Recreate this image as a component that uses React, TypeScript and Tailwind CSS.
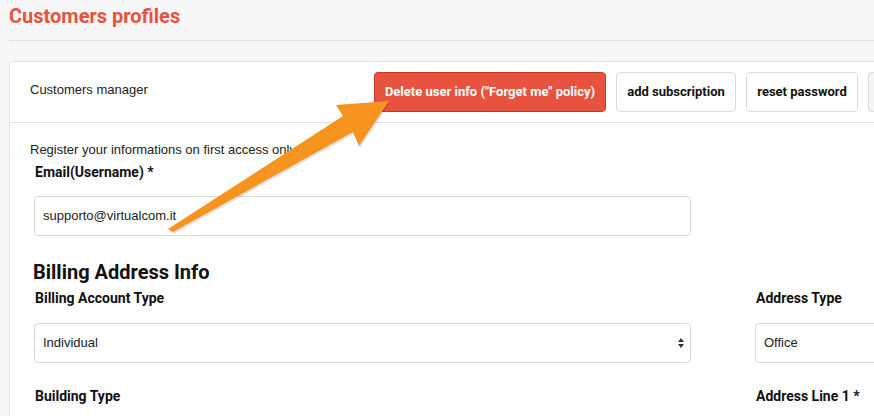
const sans = "font-['Liberation_Sans',Arial,sans-serif]";
const roboto = "font-['Roboto','Liberation_Sans',sans-serif]";

function Label({ children }: { children: React.ReactNode }) {
  return (
    <div className={`${roboto} pl-px text-[14px] leading-[20px] font-bold text-[#111]`}>
      {children}
    </div>
  );
}

function Field({ value, select }: { value: string; select?: boolean }) {
  return (
    <div
      className={`${sans} flex h-10 items-center justify-between rounded-[4px] border border-[#dcdcdc] bg-white pl-[8px] pr-[4px] text-[13px] text-[#222]`}
    >
      <span>{value}</span>
      {select && (
        <svg width="8" height="12" viewBox="0 0 8 12" className="mr-[1px]">
          <path d="M4 1 L7 5 H1 Z" fill="#333" />
          <path d="M4 11 L7 7 H1 Z" fill="#333" />
        </svg>
      )}
    </div>
  );
}

function Arrow() {
  // callout arrow pointing at the delete button
  return (
    <svg
      className="pointer-events-none absolute left-0 top-0"
      width="874"
      height="416"
      viewBox="0 0 874 416"
    >
      <polygon
        points="168,229 343,116 336,105 389,101 359,146 353,132 173,232"
        fill="#000"
        opacity="0.12"
        transform="translate(1,2)"
      />
      <polygon
        points="168,229 343,116 336,105 389,101 359,146 353,132 173,232"
        fill="#f7941f"
      />
    </svg>
  );
}

export default function App() {
  return (
    <div className="relative h-[416px] w-[874px] overflow-hidden bg-[#f7f7f7]">
      <div className="pl-[9px]">
        <h1 className={`${roboto} pt-[2px] text-[20px] leading-[28px] font-bold text-[#e8533f]`}>
          Customers profiles
        </h1>
        <div className="mt-[10px] h-px w-[900px] bg-[#e0e0e0]" />

        <div className="mt-[20px] w-[960px] rounded-[4px] border border-[#e3e3e3] bg-white">
          <div className="flex h-[61px] items-center border-b border-[#e3e3e3] pl-[20px]">
            <div className={`${sans} -mt-[4px] w-[345px] text-[13px] text-[#222]`}>Customers manager</div>
            <div className={`${roboto} flex gap-[10px] text-[13px] font-bold`}>
              <button className="h-10 w-[232px] rounded-[4px] border border-[#c23a29] bg-[#e8533f] text-white">
                Delete user info ("Forget me" policy)
              </button>
              <button className="h-10 w-[120px] rounded-[4px] border border-[#dcdcdc] bg-white text-[#111]">
                add subscription
              </button>
              <button className="h-10 w-[112px] rounded-[4px] border border-[#dcdcdc] bg-white text-[#111]">
                reset password
              </button>
              <button className="h-10 w-[100px] rounded-[4px] border border-[#dcdcdc] bg-[#f5f5f5]" />
            </div>
          </div>

          <div className="h-[400px] pl-[20px] pt-[18px]">
            <div className={`${sans} text-[13px] leading-[18px] text-[#222]`}>
              Register your informations on first access only
            </div>
            <div className="mt-[3px] w-[657px] pl-[4px]">
              <Label>Email(Username) *</Label>
            </div>
            <div className="mt-[14px] ml-[4px] w-[657px]">
              <Field value="supporto@virtualcom.it" />
            </div>

            <h2 className={`${roboto} ml-[3px] mt-[22px] text-[20px] leading-[28px] font-bold text-[#111]`}>
              Billing Address Info
            </h2>

            <div className="ml-[4px] mt-[2px] grid grid-cols-[657px_200px] gap-x-[64px] gap-y-[23px]">
              <div>
                <Label>Billing Account Type</Label>
                <div className="mt-[15px]">
                  <Field value="Individual" select />
                </div>
              </div>
              <div>
                <Label>Address Type</Label>
                <div className="mt-[15px]">
                  <Field value="Office" />
                </div>
              </div>
              <Label>Building Type</Label>
              <Label>Address Line 1 *</Label>
            </div>
          </div>
        </div>
      </div>
      <Arrow />
    </div>
  );
}
